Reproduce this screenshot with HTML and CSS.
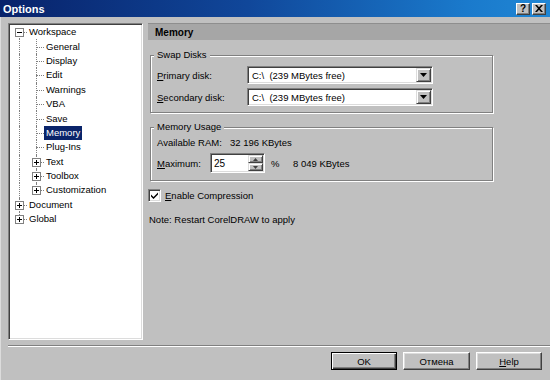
FILE: index.html
```html
<!DOCTYPE html>
<html>
<head>
<meta charset="utf-8">
<title>Options</title>
<link rel="stylesheet" href="styles.css">
</head>
<body>
<div class="win">
  <div class="titlebar">
    <span class="title">Options</span>
    <div class="tbtns">
      <span class="tbtn">?</span>
      <span class="tbtn"><svg width="8" height="7" viewBox="0 0 8 7"><path d="M0 0h2l2 2.2 2-2.2h2l-3 3.5 3 3.5h-2l-2-2.2-2 2.2h-2l3-3.5z" fill="#000"/></svg></span>
    </div>
  </div>
  <div class="body">
    <div class="main">
      <div class="tree">
        <div class="row"><span class="cell f"><i class="box"></i></span><span class="lbl">Workspace</span></div>
        <div class="row"><span class="cell v"></span><span class="cell t"></span><span class="lbl">General</span></div>
        <div class="row"><span class="cell v"></span><span class="cell t"></span><span class="lbl">Display</span></div>
        <div class="row"><span class="cell v"></span><span class="cell t"></span><span class="lbl">Edit</span></div>
        <div class="row"><span class="cell v"></span><span class="cell t"></span><span class="lbl">Warnings</span></div>
        <div class="row"><span class="cell v"></span><span class="cell t"></span><span class="lbl">VBA</span></div>
        <div class="row"><span class="cell v"></span><span class="cell t"></span><span class="lbl">Save</span></div>
        <div class="row"><span class="cell v"></span><span class="cell t"></span><span class="lbl sel">Memory</span></div>
        <div class="row"><span class="cell v"></span><span class="cell t"></span><span class="lbl">Plug-Ins</span></div>
        <div class="row"><span class="cell v"></span><span class="cell t"><i class="box plus"></i></span><span class="lbl">Text</span></div>
        <div class="row"><span class="cell v"></span><span class="cell t"><i class="box plus"></i></span><span class="lbl">Toolbox</span></div>
        <div class="row"><span class="cell v"></span><span class="cell l"><i class="box plus"></i></span><span class="lbl">Customization</span></div>
        <div class="row"><span class="cell t"><i class="box plus"></i></span><span class="lbl">Document</span></div>
        <div class="row"><span class="cell l"><i class="box plus"></i></span><span class="lbl">Global</span></div>
      </div>
      <div class="pane">
        <div class="head">Memory</div>
        <fieldset class="grp">
          <legend>Swap Disks</legend>
          <div class="rows">
            <div class="frow">
              <span class="flabel w90"><u>P</u>rimary disk:</span>
              <div class="combo"><span class="ctext">C:\&nbsp; (239 MBytes free)</span><span class="drop"><svg width="7" height="4" viewBox="0 0 7 4"><path d="M0 0h7l-3.5 4z" fill="#000"/></svg></span></div>
            </div>
            <div class="frow">
              <span class="flabel w90"><u>S</u>econdary disk:</span>
              <div class="combo"><span class="ctext">C:\&nbsp; (239 MBytes free)</span><span class="drop"><svg width="7" height="4" viewBox="0 0 7 4"><path d="M0 0h7l-3.5 4z" fill="#000"/></svg></span></div>
            </div>
          </div>
        </fieldset>
        <fieldset class="grp grp2">
          <legend>Memory Usage</legend>
          <div class="rows rows2">
            <div class="frow r12">
              <span class="flabel w73">Available RAM:</span>
              <span>32 196 KBytes</span>
            </div>
            <div class="frow">
              <span class="flabel w53"><u>M</u>aximum:</span>
              <div class="spin">
                <span class="stext">25</span>
                <span class="sbtns">
                  <span class="sb"><svg width="5" height="3" viewBox="0 0 5 3"><path d="M0 3h5l-2.5-3z" fill="#404040"/></svg></span>
                  <span class="sb"><svg width="5" height="3" viewBox="0 0 5 3"><path d="M0 0h5l-2.5 3z" fill="#404040"/></svg></span>
                </span>
              </div>
              <span class="pct">%</span>
              <span>8 049 KBytes</span>
            </div>
          </div>
        </fieldset>
        <div class="chkrow">
          <span class="chk"><svg width="7" height="7" viewBox="0 0 7 7"><path d="M0 2.5l2.5 2.5 4.5-4.5v2l-4.5 4.5-2.5-2.5z" fill="#000"/></svg></span>
          <span><u>E</u>nable Compression</span>
        </div>
        <div class="note">Note: Restart CorelDRAW to apply</div>
      </div>
    </div>
    <div class="sep"></div>
    <div class="btns">
      <span class="btn def">OK</span>
      <span class="btn w67">Отмена</span>
      <span class="btn"><u>H</u>elp</span>
    </div>
  </div>
</div>
</body>
</html>
```

FILE: styles.css
```css
* { box-sizing: border-box; }
html, body { margin: 0; padding: 0; }
body {
  width: 550px;
  height: 380px;
  overflow: hidden;
  background: #c0c0c0;
  font-family: "Liberation Sans", Arial, sans-serif;
  font-size: 9.5px;
  color: #000;
}
u { text-decoration: underline; text-underline-offset: 1px; }

.win {
  width: 550px;
  height: 380px;
  display: flex;
  flex-direction: column;
  background: #c0c0c0;
}

.titlebar {
  height: 17px;
  flex: none;
  display: flex;
  align-items: center;
  justify-content: space-between;
  padding: 0 4px 0 3px;
  background: linear-gradient(to right, #08226a 0%, #10479a 45%, #1a7acc 85%, #2086d4 100%);
}
.title { color: #fff; font-weight: bold; font-size: 11px; }
.tbtns { display: flex; gap: 2px; }
.tbtn {
  width: 14px;
  height: 12px;
  background: #c0c0c0;
  border-top: 1px solid #fff;
  border-left: 1px solid #fff;
  border-right: 1px solid #404040;
  border-bottom: 1px solid #404040;
  box-shadow: inset -1px -1px #808080;
  display: flex;
  align-items: center;
  justify-content: center;
  font-weight: bold;
  font-size: 10px;
  line-height: 1;
}

.body {
  flex: 1;
  display: flex;
  flex-direction: column;
  padding: 6px 0 0 7px;
  border-left: 1px solid #dcdcdc;
}

.main { display: flex; gap: 5px; height: 317px; flex: none; }

/* tree */
.tree {
  width: 135px;
  flex: none;
  background: #fff;
  border-top: 1px solid #808080;
  border-left: 1px solid #808080;
  border-right: 1px solid #fff;
  border-bottom: 1px solid #fff;
  box-shadow: inset 1px 1px #404040, inset -1px -1px #dcdcdc;
  padding: 1px;
}
.row { height: 14.4px; display: flex; align-items: center; }
.cell { width: 17px; height: 100%; position: relative; flex: none; }
.cell::before {
  content: "";
  position: absolute;
  left: 9px; top: 0; bottom: 0;
  border-left: 1px dotted #808080;
}
.cell::after {
  content: "";
  position: absolute;
  left: 9px; right: 0; top: 50%;
  border-top: 1px dotted #808080;
}
.cell.v::after { display: none; }
.cell.l::before { bottom: 50%; }
.cell.f::before { top: 50%; }
.box {
  position: absolute;
  z-index: 1;
  left: 5px;
  top: calc(50% - 4px);
  width: 9px;
  height: 9px;
  border: 1px solid #808080;
  background: #fff;
}
.box::before {
  content: "";
  position: absolute;
  left: 1px; right: 1px; top: 3px; height: 1px;
  background: #000;
}
.box.plus::after {
  content: "";
  position: absolute;
  top: 1px; bottom: 1px; left: 3px; width: 1px;
  background: #000;
}
.lbl { padding: 0 2px; line-height: 14px; white-space: nowrap; }
.lbl.sel { background: #0a246a; color: #fff; }

/* right pane */
.pane { flex: 1; display: flex; flex-direction: column; min-width: 0; }
.head {
  height: 17px;
  flex: none;
  background: #a6a6a6;
  border-top: 1px solid #8e8e8e;
  font-weight: bold;
  font-size: 10px;
  padding-left: 7px;
  display: flex;
  align-items: center;
}

.grp {
  margin: 9px 0 0 2px;
  width: 343px;
  min-width: 0;
  border: 1px solid #808080;
  box-shadow: inset 1px 1px #fff, 1px 1px #fff;
  padding: 0 3px 6px 3px;
}
.grp2 { margin-top: 8px; padding-bottom: 7px; }
.grp legend {
  padding: 0 3px;
  line-height: 12px;
  background: #c0c0c0;
}
.rows { padding: 5px 0 0 3px; display: flex; flex-direction: column; gap: 4px; }
.rows2 { padding-top: 3px; gap: 5px; }
.frow { display: flex; align-items: center; white-space: nowrap; }
.r12 { height: 12px; }
.flabel { flex: none; }
.w90 { width: 90px; }
.w73 { width: 73px; }
.w53 { width: 53px; }

.combo {
  width: 186px;
  height: 18px;
  background: #fff;
  border-top: 1px solid #808080;
  border-left: 1px solid #808080;
  border-right: 1px solid #fff;
  border-bottom: 1px solid #fff;
  box-shadow: inset 1px 1px #404040, inset -1px -1px #dcdcdc;
  padding: 1px;
  display: flex;
  align-items: center;
}
.ctext { flex: 1; padding-left: 3px; }
.drop, .sb {
  background: #c0c0c0;
  border-top: 1px solid #dcdcdc;
  border-left: 1px solid #dcdcdc;
  border-right: 1px solid #404040;
  border-bottom: 1px solid #404040;
  box-shadow: inset 1px 1px #fff, inset -1px -1px #808080;
  display: flex;
  align-items: center;
  justify-content: center;
}
.drop { width: 15px; height: 14px; flex: none; }

.spin {
  width: 55px;
  height: 20px;
  flex: none;
  background: #fff;
  border-top: 1px solid #808080;
  border-left: 1px solid #808080;
  border-right: 1px solid #fff;
  border-bottom: 1px solid #fff;
  box-shadow: inset 1px 1px #404040, inset -1px -1px #dcdcdc;
  padding: 1px;
  display: flex;
}
.stext { flex: 1; padding-left: 2px; display: flex; align-items: center; font-size: 10px; }
.sbtns { width: 15px; display: flex; flex-direction: column; }
.sb { flex: 1; }
.pct { width: 28px; padding-left: 6px; flex: none; }

.chkrow { display: flex; align-items: center; gap: 4px; margin-top: 8px; height: 13px; }
.chk {
  width: 13px;
  height: 13px;
  flex: none;
  background: #fff;
  border-top: 1px solid #808080;
  border-left: 1px solid #808080;
  border-right: 1px solid #fff;
  border-bottom: 1px solid #fff;
  box-shadow: inset 1px 1px #404040, inset -1px -1px #dcdcdc;
  display: flex;
  align-items: center;
  justify-content: center;
}
.note { margin-top: 12px; line-height: 12px; padding-left: 1px; }

.sep {
  height: 2px;
  flex: none;
  margin-top: 5px;
  border-top: 1px solid #808080;
  border-bottom: 1px solid #fff;
}
.btns {
  display: flex;
  justify-content: flex-end;
  gap: 6px;
  margin-top: 5px;
  padding-right: 8px;
}
.btn {
  width: 66px;
  height: 18px;
  background: #c0c0c0;
  border: 1px solid;
  border-color: #fff #404040 #404040 #fff;
  box-shadow: inset -1px -1px #808080, inset 1px 1px #dcdcdc;
  display: flex;
  align-items: center;
  justify-content: center;
}
.btn.w67 { width: 67px; }
.btn.def {
  border: 1px solid #000;
  box-shadow: inset 1px 1px #fff, inset -1px -1px #404040, inset -2px -2px #808080;
}
```
